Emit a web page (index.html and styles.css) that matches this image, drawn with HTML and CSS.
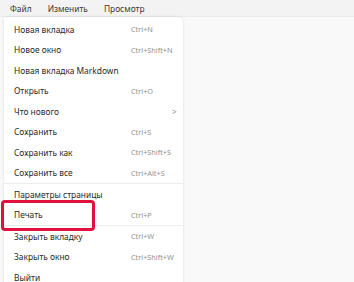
FILE: index.html
```html
<!doctype html>
<html>
<head>
    <meta charset="UTF-8">
    <title>Меню Файл</title>
    <link rel="stylesheet" href="styles.css">
</head>
<body>
<div class="menubar">
    <span class="menubar-item">Файл</span>
    <span class="menubar-item">Изменить</span>
    <span class="menubar-item">Просмотр</span>
</div>

<div class="page">
    <ul class="menu">
        <li class="item"><span>Новая вкладка</span><span class="key">Ctrl+N</span></li>
        <li class="item"><span>Новое окно</span><span class="key">Ctrl+Shift+N</span></li>
        <li class="item"><span>Новая вкладка Markdown</span></li>
        <li class="item"><span>Открыть</span><span class="key">Ctrl+O</span></li>
        <li class="item"><span>Что нового</span><span class="chevron">&gt;</span></li>
        <li class="item"><span>Сохранить</span><span class="key">Ctrl+S</span></li>
        <li class="item"><span>Сохранить как</span><span class="key">Ctrl+Shift+S</span></li>
        <li class="item"><span>Сохранить все</span><span class="key">Ctrl+Alt+S</span></li>
        <li class="sep"></li>
        <li class="item"><span>Параметры страницы</span></li>
        <li class="item marked"><span>Печать</span><span class="key">Ctrl+P</span></li>
        <li class="sep"></li>
        <li class="item"><span>Закрыть вкладку</span><span class="key">Ctrl+W</span></li>
        <li class="item"><span>Закрыть окно</span><span class="key">Ctrl+Shift+W</span></li>
        <li class="item"><span>Выйти</span></li>
    </ul>
</div>
</body>
</html>
```

FILE: styles.css
```css
html, body {
    margin: 0;
    height: 100%;
    overflow: hidden;
}
body {
    font-family: "Segoe UI", "Noto Sans", "Liberation Sans", sans-serif;
    font-size: 8.4px;
    color: #2a2a2a;
    background-color: #f9f9f9;
}
.menubar {
    display: flex;
    height: 17px;
    align-items: center;
    padding-left: 10px;
    gap: 16px;
    background-color: #f3f3f3;
    border-bottom: 1px solid #ebebeb;
    box-sizing: border-box;
}
.menubar-item {
    color: #3a3a3a;
}
.page {
    padding-left: 4px;
}
.menu {
    list-style: none;
    margin: 0;
    padding: 2px 0 0;
    width: 179px;
    height: 300px;
    background-color: #fff;
    border-radius: 0 5px 0 0;
    box-shadow: 0 0 3px rgba(0, 0, 0, .12);
}
.item {
    display: flex;
    align-items: center;
    height: 20.5px;
    padding-left: 10px;
    position: relative;
}
.item .key {
    position: absolute;
    left: 127px;
    font-size: 7.3px;
    color: #909090;
}
.item .chevron {
    position: absolute;
    left: 168px;
    font-size: 8px;
    color: #909090;
}
.sep {
    height: 1px;
    background-color: #ececec;
}
.item.marked::after {
    content: "";
    position: absolute;
    left: -3px;
    top: -5px;
    width: 88px;
    height: 25px;
    border: 3px solid #e0103c;
    border-radius: 4px;
}
```
